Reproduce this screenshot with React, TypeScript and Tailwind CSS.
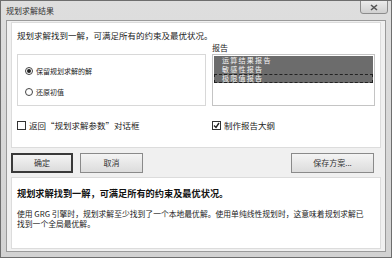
const font = { fontFamily: '"Noto Sans CJK SC", "Liberation Sans", sans-serif' };

const reports = ['运算结果报告', '敏感性报告', '极限值报告'];

function Radio({ checked, label }: { checked?: boolean; label: string }) {
  return (
    <div className="flex items-center gap-[3px] h-[10px]">
      <span className="w-[8px] h-[8px] rounded-full border border-[#444] bg-white flex items-center justify-center">
        {checked && <span className="w-[4px] h-[4px] rounded-full bg-[#222]" />}
      </span>
      <span className="text-[7px] leading-none text-[#222]">{label}</span>
    </div>
  );
}

function Check({ checked, label }: { checked?: boolean; label: string }) {
  return (
    <div className="flex items-center gap-[3px]">
      <span className="w-[9px] h-[9px] border border-[#333] bg-white flex items-center justify-center">
        {checked && (
          <svg width="7" height="7" viewBox="0 0 7 7">
            <path d="M1 3.5 L3 5.5 L6 1" stroke="#222" strokeWidth="1.4" fill="none" />
          </svg>
        )}
      </span>
      <span className="text-[8.5px] leading-none text-[#222]">{label}</span>
    </div>
  );
}

function Button({ label, primary, w }: { label: string; primary?: boolean; w: string }) {
  return (
    <div
      className={`${w} h-[20px] flex items-center justify-center text-[8px] text-[#333] bg-gradient-to-b from-[#f4f4f4] to-[#dcdcdc] ${
        primary ? 'border-2 border-[#3a3a3a]' : 'border border-[#8a8a8a]'
      }`}
    >
      {label}
    </div>
  );
}

export default function App() {
  return (
    <div
      style={font}
      className="w-[392px] h-[258px] flex flex-col bg-gradient-to-b from-[#dedede] to-[#d2d2d2] border border-[#6e6e6e] overflow-hidden"
    >
      {/* Title bar */}
      <div className="h-[19px] flex items-start justify-between pl-[5px] pr-[3px]">
        <span className="text-[8px] leading-none mt-[6px] text-[#333]">规划求解结果</span>
        <div className="w-[28px] h-[14px] -mt-px rounded-b-[3px] border border-[#8c8c8c] bg-gradient-to-b from-[#ececec] to-[#d0d0d0] flex items-center justify-center">
          <svg width="8" height="7" viewBox="0 0 8 7">
            <path d="M1 1 L7 6 M7 1 L1 6" stroke="#555" strokeWidth="1.6" />
          </svg>
        </div>
      </div>

      {/* Client area */}
      <div className="flex-1 mx-[5px] mb-[5px] bg-[#f0f0f0] border border-[#9a9a9a] flex flex-col px-[4px] pt-px pb-[2px]">
        {/* Upper panel */}
        <div className="h-[126px] bg-white border border-[#dcdcdc] px-[5px] pt-[7px] flex flex-col">
          <p className="text-[8.5px] leading-[10px] text-[#222]">规划求解找到一解，可满足所有的约束及最优状况。</p>
          <div className="flex gap-[6px] mt-[3px]">
            <div className="w-[190px] flex flex-col">
              <div className="h-[10px]" />
              <div className="mt-[1px] h-[52px] border border-[#d8d8d8] flex flex-col pl-[7px] pt-[11px] gap-[11px]">
                <Radio checked label="保留规划求解的解" />
                <Radio label="还原初值" />
              </div>
            </div>
            <div className="w-[164px] flex flex-col">
              <span className="text-[8px] leading-[10px] text-[#222]">报告</span>
              <div className="mt-[1px] h-[52px] border border-[#c4c4c4] flex flex-col pt-px px-px">
                {reports.map((r, i) => (
                  <div
                    key={r}
                    className={`h-[9px] bg-[#6c6c6c] text-[#f4f4f4] text-[7px] pl-[8px] tracking-[1.3px] flex items-center overflow-hidden ${
                      i === 2 ? 'outline outline-1 outline-dashed outline-[#222] -outline-offset-1' : ''
                    }`}
                  >
                    <span className="leading-[9px]">{r}</span>
                  </div>
                ))}
              </div>
            </div>
          </div>
          <div className="flex gap-[6px] mt-[15px]">
            <div className="w-[190px]">
              <Check label="返回“规划求解参数”对话框" />
            </div>
            <div className="w-[164px]">
              <Check checked label="制作报告大纲" />
            </div>
          </div>
        </div>

        {/* Buttons */}
        <div className="flex mt-[4px] h-[21px] items-center">
          <Button primary label="确定" w="w-[62px]" />
          <div className="ml-[7px]">
            <Button label="取消" w="w-[63px]" />
          </div>
          <div className="ml-auto mr-[7px]">
            <Button label="保存方案..." w="w-[83px]" />
          </div>
        </div>

        {/* Lower panel */}
        <div className="flex-1 mt-[4px] bg-white border border-[#dcdcdc] px-[5px] pt-[10px]">
          <p className="text-[9.2px] leading-[10px] font-bold text-[#111]">规划求解找到一解，可满足所有的约束及最优状况。</p>
          <p className="text-[7.8px] leading-[10px] text-[#222] mt-[11px] whitespace-nowrap">
            使用 GRG 引擎时，规划求解至少找到了一个本地最优解。使用单纯线性规划时，这意味着规划求解已
            <br />
            找到一个全局最优解。
          </p>
        </div>
      </div>
    </div>
  );
}
